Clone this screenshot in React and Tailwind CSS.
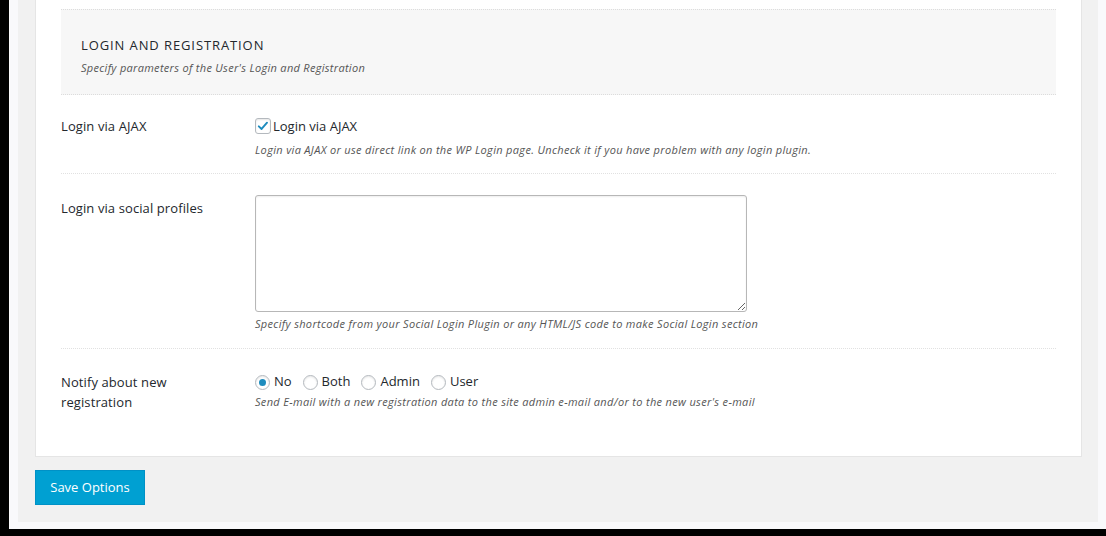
import { useState } from 'react'

const font = { fontFamily: '"Open Sans", "Noto Sans", sans-serif' }

const Row = ({ label, children, className = '' }) => (
  <div className={`flex border-b border-dotted border-[#e1e1e1] ${className}`}>
    <div className="w-[194px] shrink-0 pr-6 text-[13px] leading-5 tracking-[0.1px] text-[#23282d]">{label}</div>
    <div className="flex-1">{children}</div>
  </div>
)

const Desc = ({ children, className = '' }) => (
  <p className={`text-[11px] italic leading-4 tracking-[0.33px] text-[#555] ${className}`}>{children}</p>
)

export default function App() {
  const [ajax, setAjax] = useState(true)
  const [notify, setNotify] = useState('no')

  return (
    <div className="h-[536px] bg-black pl-[9px] pb-[7px] flex" style={font}>
      <div className="flex-1 bg-[#f9f9fb] pl-[9px] pr-[8px] pb-[7px]">
        <div className="h-full bg-[#f1f1f1] pl-[17px] pr-[16px]">
          <div className="bg-white border border-t-0 border-[#e5e5e5] px-[25px] pt-[9px] pb-[44px]">
            {/* Section header */}
            <div className="bg-[#f7f7f7] border-y border-dotted border-[#dcdcdc] pl-5 pt-[25px] pb-[18px]">
              <h3 className="text-[13px] leading-5 tracking-[0.9px] uppercase text-[#23282d]">Login and Registration</h3>
              <p className="mt-[5px] text-[11px] italic leading-4 tracking-[0.3px] text-[#555]">Specify parameters of the User's Login and Registration</p>
            </div>

            <Row label="Login via AJAX" className="pt-[21px] pb-[15px]">
              <label className="flex items-center gap-[2px] text-[13px] leading-5 text-[#23282d] cursor-pointer">
                <span
                  onClick={() => setAjax(!ajax)}
                  className="w-4 h-4 rounded-[3px] border border-[#b4b9be] bg-white shadow-[inset_0_1px_2px_rgba(0,0,0,0.1)] flex items-center justify-center"
                >
                  {ajax && (
                    <svg viewBox="0 0 16 16" className="w-[14px] h-[14px]">
                      <path d="M3.2 8.4 L6.4 11.4 L12.6 4.2" fill="none" stroke="#1e8cbe" strokeWidth="2.2" strokeLinecap="round" strokeLinejoin="round" />
                    </svg>
                  )}
                </span>
                Login via AJAX
              </label>
              <Desc className="mt-[6px]">Login via AJAX or use direct link on the WP Login page. Uncheck it if you have problem with any login plugin.</Desc>
            </Row>

            <Row label={<span className="block pt-[3px]">Login via social profiles</span>} className="pt-[21px] pb-[16px]">
              <textarea className="block w-[492px] h-[117px] rounded-[3px] border border-[#b7b7b7] shadow-[inset_0_1px_2px_rgba(0,0,0,0.07)] outline-none" />
              <Desc className="mt-[4px]">Specify shortcode from your Social Login Plugin or any HTML/JS code to make Social Login section</Desc>
            </Row>

            <div className="flex pt-[23px]">
              <div className="w-[194px] shrink-0 pr-[40px] text-[13px] leading-5 tracking-[0.1px] text-[#23282d]">Notify about new registration</div>
              <div className="flex-1">
                <div className="flex items-center h-5 text-[13px] text-[#23282d]">
                  {[['no', 'No'], ['both', 'Both'], ['admin', 'Admin'], ['user', 'User']].map(([v, t]) => (
                    <label key={v} className="flex items-center mr-[11px] cursor-pointer" onClick={() => setNotify(v)}>
                      <span className="w-[15px] h-[15px] rounded-full border border-[#b4b9be] bg-white shadow-[inset_0_1px_2px_rgba(0,0,0,0.1)] flex items-center justify-center mr-[4px]">
                        {notify === v && <span className="w-[7px] h-[7px] rounded-full bg-[#1e8cbe]" />}
                      </span>
                      {t}
                    </label>
                  ))}
                </div>
                <Desc className="mt-[2px]">Send E-mail with a new registration data to the site admin e-mail and/or to the new user's e-mail</Desc>
              </div>
            </div>
          </div>

          <button className="mt-[13px] w-[110px] h-[35px] bg-[#00a0d2] border border-[#0091c6] text-white text-[13px]">
            Save Options
          </button>
        </div>
      </div>
    </div>
  )
}
